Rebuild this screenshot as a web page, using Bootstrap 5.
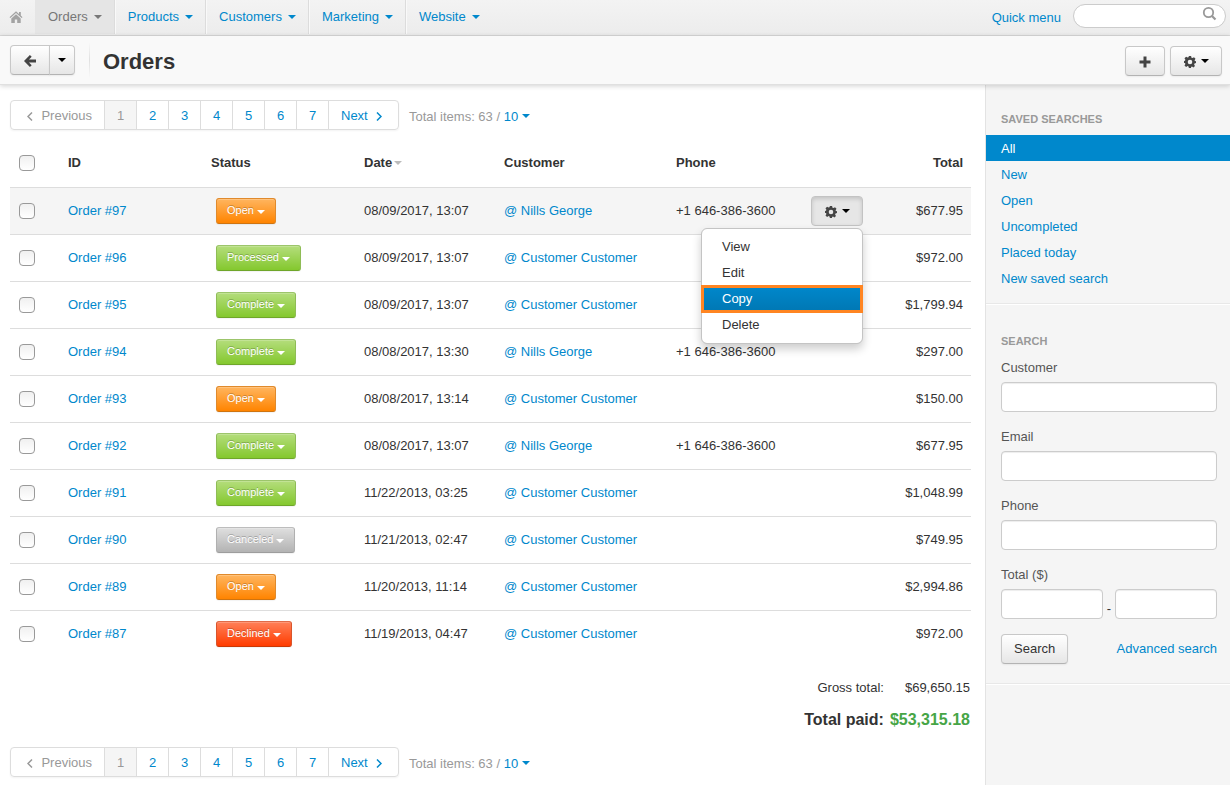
<!DOCTYPE html>
<html lang="en">
<head>
<meta charset="utf-8">
<meta name="viewport" content="width=device-width, initial-scale=1">
<title>Orders</title>
<link href="https://cdn.jsdelivr.net/npm/bootstrap@5.3.0/dist/css/bootstrap.min.css" rel="stylesheet">
<style>
body { font-family: "Liberation Sans", Arial, sans-serif; font-size: 13px; line-height: 20px; color: #333; background: #fff; }
a { color: #08c; text-decoration: none; }
.dropdown-toggle::after { border-top: 4px solid; border-left: 4px solid transparent; border-right: 4px solid transparent; margin-left: 6px; vertical-align: 2px; }

/* top menu */
.topbar { height: 36px; background: linear-gradient(#f3f3f3, #ececec); border-bottom: 1px solid #d9d9d9; }
.topbar .nav-link { height: 34px; padding: 7px 12px 7px 13px; color: #08c; line-height: 20px; border-right: 1px solid #dcdcdc; box-shadow: 1px 0 0 #f9f9f9; }
.topbar .nav-item:last-child .nav-link { border-right: 0; box-shadow: none; }
.topbar .nav-link.active { background: #e5e5e5; color: #777; }
.topbar .home-link { width: 35px; padding: 6px 9px; border: 0; box-shadow: none; color: #a3a3a3; }
.quick-search { width: 153px; height: 24px; }
.quick-search .form-control { height: 24px; min-height: 0; padding: 0 28px 0 12px; font-size: 13px; border: 1px solid #ccc; border-radius: 12px; }
.quick-search svg { right: 9px; top: 2px; color: #999; }

/* title bar */
.titlebar { height: 49px; padding: 0 8px 0 10px; background: #f9f9f9; border-bottom: 1px solid #e0e0e0; box-shadow: 0 1px 5px rgba(0,0,0,.18); z-index: 2; }
.titlebar h1 { font-size: 22px; line-height: 28px; font-weight: 700; padding: 3px 0 0 13px; }
.title-rule { width: 1px; height: 36px; background: linear-gradient(#f9f9f9, #e0e0e0, #f9f9f9); margin-left: 14px; }
.title-tools { gap: 5px; padding-top: 2px; }
.btn { font-size: 13px; line-height: 20px; padding: 4px 12px; border-radius: 4px; }
.btn-grey { --bs-btn-color: #333; --bs-btn-hover-color: #333; --bs-btn-active-color: #333; --bs-btn-border-color: #c6c6c6; --bs-btn-hover-border-color: #b3b3b3; --bs-btn-active-border-color: #c3c3c3; color: #333; background: linear-gradient(#fff, #e6e6e6); border-color: #c8c8c8; border-bottom-color: #b3b3b3; box-shadow: 0 1px 2px rgba(0,0,0,.06); height: 30px; }
.btn-grey.show { background: #e6e6e6; box-shadow: inset 0 2px 4px rgba(0,0,0,.15); border-color: #c3c3c3; }
.btn-grey.dropdown-toggle::after { color: #000; margin-left: 4px; }
.btn-back { width: 40px; padding: 4px 0; }
.btn-split { width: 26px; padding: 4px 0; }
.btn-grey.btn-split::after { margin-left: 0; vertical-align: 2px; }
.btn-gear { width: 52px; padding: 4px 0; }
.glyph { width: 14px; height: 14px; fill: currentColor; vertical-align: -4px; color: #444; }
.home-link .glyph { color: inherit; }

/* listing */
.listing { padding: 15px 14px 8px 10px; min-width: 0; }
.pagination { --bs-pagination-font-size: 13px; --bs-pagination-padding-x: 0; --bs-pagination-padding-y: 4px; --bs-pagination-color: #08c; --bs-pagination-border-color: #ddd; --bs-pagination-border-radius: 4px; --bs-pagination-active-bg: #f5f5f5; --bs-pagination-active-color: #999; --bs-pagination-active-border-color: #ddd; --bs-pagination-disabled-bg: #fff; --bs-pagination-disabled-color: #999; --bs-pagination-disabled-border-color: #ddd; box-shadow: 0 1px 2px rgba(0,0,0,.05); border-radius: 4px; }
.page-link { width: 33px; height: 30px; padding-top: 5px; text-align: center; line-height: 20px; }
.page-prev { width: 95px; padding-right: 12px; text-align: right; }
.page-next { width: 71px; padding-left: 12px; text-align: left; }
.chev { width: 6px; height: 9px; fill: none; stroke: currentColor; stroke-width: 1.5; }
.items-total { color: #999; padding: 3px 0 0 10px; }
.items-total .dropdown-toggle::after { margin-left: 4px; vertical-align: 3px; }
.orders { --bs-table-color: #333; --bs-table-bg: transparent; table-layout: fixed; border-color: #ddd; }
.orders > :not(caption) > * > * { padding: 8px; height: 47px; border-bottom-width: 1px; vertical-align: middle; color: #333; white-space: nowrap; }
.orders > thead > tr > th { height: 49px; padding-top: 10px; }
.orders > tbody > tr:last-child > td { border-bottom: 0; }
.orders > tbody > tr.current > td { background: #f5f5f5; }
.orders th, .orders td { line-height: 20px; }
.orders td.status-cell { padding: 0 0 0 13px; }
.orders td.tools-cell { padding: 0 8px; }
.c-check { width: 50px; } .c-id { width: 143px; } .c-status { width: 153px; } .c-date { width: 140px; } .c-customer { width: 172px; } .c-tools { width: 76px; } .c-total { width: 100px; }
.orders .form-check-input { width: 16px; height: 16px; margin: 0 0 0 1px; border: 1px solid #999; border-radius: 4px; background: linear-gradient(#f0f0f0, #fff); display: block; }
.orders th .sort-arrow::after { color: #bbb; margin-left: 2px; vertical-align: 2px; }
.btn-status { height: 26px; font-size: 11px; line-height: 16px; padding: 3px 10px 5px; border-radius: 3px; color: #fff; border: 1px solid; text-shadow: 0 -1px 0 rgba(0,0,0,.25); box-shadow: inset 0 1px 0 rgba(255,255,255,.2), 0 1px 1px rgba(0,0,0,.05); }
.btn-status.dropdown-toggle::after { margin-left: 3px; vertical-align: 0; }
.st-open, .st-open:hover { color: #fff; background: linear-gradient(#ffb55f, #ff8400); border-color: #e08a2c #e08a2c #cf7410; }
.st-done, .st-done:hover { color: #fff; background: linear-gradient(#b4dd7c, #84c82e); border-color: #9cc56b #8fbc56 #6fa62a; }
.st-cancel, .st-cancel:hover { color: #fff; background: linear-gradient(#dfdfdf, #b3b3b3); border-color: #bdbdbd #b0b0b0 #9d9d9d; }
.st-declined, .st-declined:hover { color: #fff; background: linear-gradient(#ff8058, #ff3c00); border-color: #e06b48 #d9552c #c93806; }
.row-menu { --bs-dropdown-min-width: 162px; --bs-dropdown-padding-y: 5px; --bs-dropdown-font-size: 13px; --bs-dropdown-border-color: #c4c4c4; --bs-dropdown-border-radius: 6px; --bs-dropdown-spacer: 2px; --bs-dropdown-item-padding-x: 20px; --bs-dropdown-item-padding-y: 3px; --bs-dropdown-link-color: #333; --bs-dropdown-link-active-bg: #0081c2; box-shadow: 0 5px 10px rgba(0,0,0,.2); }
.row-menu .dropdown-item.active { background: linear-gradient(#08c, #0077b3); outline: 3px solid #ff8522; outline-offset: -2px; }
.totals { margin-top: 15px; margin-bottom: 11px; }
.totals th, .totals td { padding: 5px 1px 5px 5px; line-height: 22px; text-align: right; }
.totals th { font-weight: 400; }
.totals .paid th, .totals .paid td { font-size: 16px; font-weight: 700; }
.totals .paid td { color: #46a546; }

/* sidebar */
.side { flex: 0 0 245px; background: #f5f5f5; border-left: 1px solid #e3e3e3; padding-top: 24px; }
.side h2 { font-size: 11px; line-height: 20px; font-weight: 700; color: #999; text-transform: uppercase; margin: 0; padding: 0 15px; }
.side .nav { padding: 6px 0 12px; }
.side .nav-link { padding: 4px 15px 2px; line-height: 20px; color: #08c; }
.side .nav-link.active { background: #08c; color: #fff; }
.side-rule { border-top: 1px solid #e8e8e8; border-bottom: 1px solid #fff; }
.side-rule + h2 { margin-top: 26px; }
.side form { padding: 7px 13px 19px 15px; }
.side label { display: block; font-size: 13px; line-height: 20px; color: #555; margin: 0 0 4px; }
.side .form-control { height: 30px; min-height: 0; padding: 4px 6px; font-size: 13px; border: 1px solid #ccc; border-radius: 4px; box-shadow: inset 0 1px 1px rgba(0,0,0,.075); }
.field { margin-bottom: 15px; }
</style>
</head>
<body class="d-flex flex-column min-vh-100">
<svg class="d-none" aria-hidden="true">
  <symbol id="i-home" viewBox="0 0 14 14"><path d="M7 1.3 0.5 7.2l.9.9L7 3l5.600 5.100.9-.9L11.800 5.600V2H10v2zM7 4.200 2.300 8.500V13H5.800V9.500H8.200V13h3.500V8.500z"/></symbol>
  <symbol id="i-back" viewBox="0 0 14 14"><path d="M6.900 1 8.700 2.800 6 5.600H13V8.400H6L8.700 11.200 6.900 13 1 7z"/></symbol>
  <symbol id="i-plus" viewBox="0 0 14 14"><path d="M5.500 1.500h3v4h4v3h-4v4h-3v-4h-4v-3h4z"/></symbol>
  <symbol id="i-gear" viewBox="0 0 14 14"><path fill-rule="evenodd" d="M5.900 1h2.200l.4 1.700 1 .4 1.500-.9 1.500 1.600-.9 1.400.4 1L13 5.900v2.200l-1.500.4-.4 1 .9 1.500-1.600 1.500-1.400-.9-1 .4L8.100 13H5.900l-.4-1.500-1-.4-1.400.9-1.600-1.500.9-1.500-.4-1L1 8.100V5.900l1-.2.400-1-.9-1.400 1.600-1.600 1.400.9 1-.4zM7 4.700a2.300 2.300 0 1 0 0 4.600 2.300 2.300 0 0 0 0-4.600z"/></symbol>
</svg>

<nav class="topbar d-flex align-items-start">
  <ul class="nav flex-nowrap">
    <li class="nav-item"><a class="nav-link home-link" href="#" aria-label="Home"><svg class="glyph"><use href="#i-home"/></svg></a></li>
    <li class="nav-item"><a class="nav-link dropdown-toggle active" href="#">Orders</a></li>
    <li class="nav-item"><a class="nav-link dropdown-toggle" href="#">Products</a></li>
    <li class="nav-item"><a class="nav-link dropdown-toggle" href="#">Customers</a></li>
    <li class="nav-item"><a class="nav-link dropdown-toggle" href="#">Marketing</a></li>
    <li class="nav-item"><a class="nav-link dropdown-toggle" href="#">Website</a></li>
  </ul>
  <a class="ms-auto me-2 pt-2 px-1" href="#">Quick menu</a>
  <div class="quick-search position-relative mt-1 me-1">
    <input class="form-control" type="text" aria-label="Search the store">
    <svg class="position-absolute" width="15" height="15" viewBox="0 0 15 15" fill="none" stroke="currentColor"><circle cx="6.500" cy="6.500" r="4.700" stroke-width="1.800"/><path d="M10 10l3.500 3.500" stroke-width="2.200"/></svg>
  </div>
</nav>

<header class="titlebar d-flex align-items-center position-relative">
  <div class="btn-group">
    <button class="btn btn-grey btn-back" type="button" aria-label="Back"><svg class="glyph"><use href="#i-back"/></svg></button>
    <button class="btn btn-grey btn-split dropdown-toggle" type="button" aria-label="Recent pages"></button>
  </div>
  <div class="title-rule"></div>
  <h1 class="mb-0">Orders</h1>
  <div class="title-tools d-flex ms-auto">
    <button class="btn btn-grey btn-back" type="button" aria-label="Add order"><svg class="glyph"><use href="#i-plus"/></svg></button>
    <button class="btn btn-grey btn-gear dropdown-toggle" type="button" aria-label="Tools"><svg class="glyph"><use href="#i-gear"/></svg></button>
  </div>
</header>

<div class="d-flex flex-grow-1">
  <main class="listing flex-grow-1">
    <div class="d-flex align-items-center">
      <ul class="pagination mb-0">
        <li class="page-item disabled"><a class="page-link page-prev" href="#"><svg class="chev me-2" viewBox="0 0 6 9"><path d="M5 .5 1 4.500l4 4"/></svg>Previous</a></li>
        <li class="page-item active"><a class="page-link" href="#">1</a></li>
        <li class="page-item"><a class="page-link" href="#">2</a></li>
        <li class="page-item"><a class="page-link" href="#">3</a></li>
        <li class="page-item"><a class="page-link" href="#">4</a></li>
        <li class="page-item"><a class="page-link" href="#">5</a></li>
        <li class="page-item"><a class="page-link" href="#">6</a></li>
        <li class="page-item"><a class="page-link" href="#">7</a></li>
        <li class="page-item"><a class="page-link page-next" href="#">Next<svg class="chev ms-2" viewBox="0 0 6 9"><path d="M1 .5l4 4-4 4"/></svg></a></li>
      </ul>
      <div class="items-total">Total items: 63 / <a class="dropdown-toggle" href="#">10</a></div>
    </div>

    <table class="table orders mt-2 mb-0">
      <colgroup><col class="c-check"><col class="c-id"><col class="c-status"><col class="c-date"><col class="c-customer"><col><col class="c-tools"><col class="c-total"></colgroup>
      <thead>
        <tr><th><input class="form-check-input" type="checkbox" aria-label="Select all"></th><th>ID</th><th>Status</th><th>Date<span class="dropdown-toggle sort-arrow"></span></th><th>Customer</th><th>Phone</th><th></th><th class="text-end">Total</th></tr>
      </thead>
      <tbody>
        <tr class="current"><td><input class="form-check-input" type="checkbox" aria-label="Order 97"></td><td><a href="#">Order #97</a></td><td class="status-cell"><button class="btn btn-status st-open dropdown-toggle" type="button">Open</button></td><td>08/09/2017, 13:07</td><td><a href="#">@ Nills George</a></td><td>+1 646-386-3600</td>
          <td class="tools-cell">
            <div class="dropdown text-end">
              <button class="btn btn-grey btn-gear dropdown-toggle show" type="button" aria-expanded="true" aria-label="Order tools"><svg class="glyph"><use href="#i-gear"/></svg></button>
              <ul class="dropdown-menu dropdown-menu-end row-menu show" data-bs-popper="static">
                <li><a class="dropdown-item" href="#">View</a></li>
                <li><a class="dropdown-item" href="#">Edit</a></li>
                <li><a class="dropdown-item active" href="#">Copy</a></li>
                <li><a class="dropdown-item" href="#">Delete</a></li>
              </ul>
            </div>
          </td><td class="text-end">$677.95</td></tr>
        <tr><td><input class="form-check-input" type="checkbox" aria-label="Order 96"></td><td><a href="#">Order #96</a></td><td class="status-cell"><button class="btn btn-status st-done dropdown-toggle" type="button">Processed</button></td><td>08/09/2017, 13:07</td><td><a href="#">@ Customer Customer</a></td><td></td><td></td><td class="text-end">$972.00</td></tr>
        <tr><td><input class="form-check-input" type="checkbox" aria-label="Order 95"></td><td><a href="#">Order #95</a></td><td class="status-cell"><button class="btn btn-status st-done dropdown-toggle" type="button">Complete</button></td><td>08/09/2017, 13:07</td><td><a href="#">@ Customer Customer</a></td><td></td><td></td><td class="text-end">$1,799.94</td></tr>
        <tr><td><input class="form-check-input" type="checkbox" aria-label="Order 94"></td><td><a href="#">Order #94</a></td><td class="status-cell"><button class="btn btn-status st-done dropdown-toggle" type="button">Complete</button></td><td>08/08/2017, 13:30</td><td><a href="#">@ Nills George</a></td><td>+1 646-386-3600</td><td></td><td class="text-end">$297.00</td></tr>
        <tr><td><input class="form-check-input" type="checkbox" aria-label="Order 93"></td><td><a href="#">Order #93</a></td><td class="status-cell"><button class="btn btn-status st-open dropdown-toggle" type="button">Open</button></td><td>08/08/2017, 13:14</td><td><a href="#">@ Customer Customer</a></td><td></td><td></td><td class="text-end">$150.00</td></tr>
        <tr><td><input class="form-check-input" type="checkbox" aria-label="Order 92"></td><td><a href="#">Order #92</a></td><td class="status-cell"><button class="btn btn-status st-done dropdown-toggle" type="button">Complete</button></td><td>08/08/2017, 13:07</td><td><a href="#">@ Nills George</a></td><td>+1 646-386-3600</td><td></td><td class="text-end">$677.95</td></tr>
        <tr><td><input class="form-check-input" type="checkbox" aria-label="Order 91"></td><td><a href="#">Order #91</a></td><td class="status-cell"><button class="btn btn-status st-done dropdown-toggle" type="button">Complete</button></td><td>11/22/2013, 03:25</td><td><a href="#">@ Customer Customer</a></td><td></td><td></td><td class="text-end">$1,048.99</td></tr>
        <tr><td><input class="form-check-input" type="checkbox" aria-label="Order 90"></td><td><a href="#">Order #90</a></td><td class="status-cell"><button class="btn btn-status st-cancel dropdown-toggle" type="button">Canceled</button></td><td>11/21/2013, 02:47</td><td><a href="#">@ Customer Customer</a></td><td></td><td></td><td class="text-end">$749.95</td></tr>
        <tr><td><input class="form-check-input" type="checkbox" aria-label="Order 89"></td><td><a href="#">Order #89</a></td><td class="status-cell"><button class="btn btn-status st-open dropdown-toggle" type="button">Open</button></td><td>11/20/2013, 11:14</td><td><a href="#">@ Customer Customer</a></td><td></td><td></td><td class="text-end">$2,994.86</td></tr>
        <tr><td><input class="form-check-input" type="checkbox" aria-label="Order 87"></td><td><a href="#">Order #87</a></td><td class="status-cell"><button class="btn btn-status st-declined dropdown-toggle" type="button">Declined</button></td><td>11/19/2013, 04:47</td><td><a href="#">@ Customer Customer</a></td><td></td><td></td><td class="text-end">$972.00</td></tr>
      </tbody>
    </table>

    <table class="totals ms-auto">
      <tr><th scope="row">Gross total:</th><td>$69,650.15</td></tr>
      <tr class="paid"><th scope="row">Total paid:</th><td>$53,315.18</td></tr>
    </table>

    <div class="d-flex align-items-center">
      <ul class="pagination mb-0">
        <li class="page-item disabled"><a class="page-link page-prev" href="#"><svg class="chev me-2" viewBox="0 0 6 9"><path d="M5 .5 1 4.500l4 4"/></svg>Previous</a></li>
        <li class="page-item active"><a class="page-link" href="#">1</a></li>
        <li class="page-item"><a class="page-link" href="#">2</a></li>
        <li class="page-item"><a class="page-link" href="#">3</a></li>
        <li class="page-item"><a class="page-link" href="#">4</a></li>
        <li class="page-item"><a class="page-link" href="#">5</a></li>
        <li class="page-item"><a class="page-link" href="#">6</a></li>
        <li class="page-item"><a class="page-link" href="#">7</a></li>
        <li class="page-item"><a class="page-link page-next" href="#">Next<svg class="chev ms-2" viewBox="0 0 6 9"><path d="M1 .5l4 4-4 4"/></svg></a></li>
      </ul>
      <div class="items-total">Total items: 63 / <a class="dropdown-toggle" href="#">10</a></div>
    </div>
  </main>

  <aside class="side">
    <h2>Saved searches</h2>
    <ul class="nav flex-column">
      <li><a class="nav-link active" href="#">All</a></li>
      <li><a class="nav-link" href="#">New</a></li>
      <li><a class="nav-link" href="#">Open</a></li>
      <li><a class="nav-link" href="#">Uncompleted</a></li>
      <li><a class="nav-link" href="#">Placed today</a></li>
      <li><a class="nav-link" href="#">New saved search</a></li>
    </ul>
    <div class="side-rule"></div>
    <h2>Search</h2>
    <form>
      <div class="field"><label for="f-customer">Customer</label><input class="form-control" id="f-customer" type="text"></div>
      <div class="field"><label for="f-email">Email</label><input class="form-control" id="f-email" type="text"></div>
      <div class="field"><label for="f-phone">Phone</label><input class="form-control" id="f-phone" type="text"></div>
      <div class="field">
        <label for="f-from">Total ($)</label>
        <div class="d-flex align-items-end">
          <input class="form-control" id="f-from" type="text"><span class="px-1">-</span><input class="form-control" type="text" aria-label="Total up to">
        </div>
      </div>
      <div class="d-flex align-items-center justify-content-between">
        <button class="btn btn-grey" type="button">Search</button>
        <a href="#">Advanced search</a>
      </div>
    </form>
    <div class="side-rule"></div>
  </aside>
</div>
<script src="https://cdn.jsdelivr.net/npm/bootstrap@5.3.0/dist/js/bootstrap.bundle.min.js"></script>
</body>
</html>
